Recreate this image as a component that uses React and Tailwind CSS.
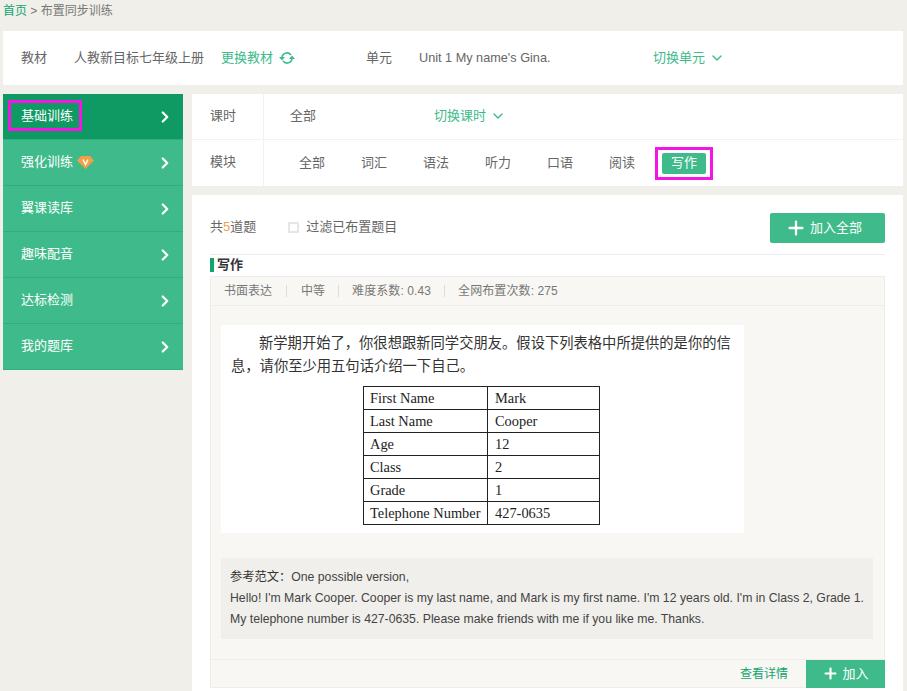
import { ChevronRight, ChevronDown, Plus } from 'lucide-react';

const SIDE = ['基础训练', '强化训练', '翼课读库', '趣味配音', '达标检测', '我的题库'];
const TABS = ['全部', '词汇', '语法', '听力', '口语', '阅读'];
const ROWS = [
  ['First Name', 'Mark'],
  ['Last Name', 'Cooper'],
  ['Age', '12'],
  ['Class', '2'],
  ['Grade', '1'],
  ['Telephone Number', '427-0635'],
];

function VipBadge() {
  return (
    <svg width="17" height="14" viewBox="0 0 17 14" className="ml-[4px]">
      <path d="M4 1h9l4 4.500L8.500 14 0 5.500z" fill="#f0a045" />
      <path d="M6 4.500l2.500 5 2.500-5" fill="none" stroke="#fff" strokeWidth="1.400" />
    </svg>
  );
}

function SyncIcon() {
  return (
    <svg width="16" height="14" viewBox="0 0 16 14" fill="none" className="ml-[6px]">
      <path d="M3 7a5 5 0 0 1 9-3" stroke="#3fbb8b" strokeWidth="1.600" />
      <path d="M13 7a5 5 0 0 1-9 3" stroke="#3fbb8b" strokeWidth="1.600" />
      <path d="M0 6h6L3 9.500z" fill="#3fbb8b" />
      <path d="M10 8h6l-3-3.500z" fill="#3fbb8b" />
    </svg>
  );
}

export default function App() {
  return (
    <div className="w-[907px] h-[691px] overflow-hidden bg-[#f0efea] text-[13px] text-[#666] font-['Liberation_Sans','Noto_Sans_CJK_SC',sans-serif]">
      {/* breadcrumb */}
      <div className="h-[31px] pl-[3px] pt-[3px] text-[12px] leading-[16px] text-[#777]">
        <span className="text-[#10a56f]">首页</span> &gt; 布置同步训练
      </div>

      {/* book bar */}
      <div className="ml-[3px] w-[900px] h-[54px] bg-white flex items-center">
        <span className="ml-[18px] w-[53px]">教材</span>
        <span className="w-[147px]">人教新目标七年级上册</span>
        <span className="flex items-center text-[#3dba8a]">
          更换教材
          <SyncIcon />
        </span>
        <span className="ml-[71px] w-[53px]">单元</span>
        <span className="w-[234px] text-[12.7px] mt-[2px]">Unit 1 My name's Gina.</span>
        <span className="flex items-center text-[#3dba8a] -mt-[1px]">
          切换单元
          <ChevronDown className="w-[16px] h-[16px] ml-[4px]" strokeWidth={2} />
        </span>
      </div>

      <div className="flex items-start mt-[9px] ml-[3px]">
        {/* sidebar */}
        <aside className="w-[180px] flex-none">
          {SIDE.map((label, i) => (
            <div
              key={label}
              className={`h-[46px] flex items-center justify-between pr-[9px] text-white border-b border-[#2fae7e] ${i === 0 ? 'bg-[#0e9a62] pl-[5px]' : 'bg-[#3fbb8b] pl-[18px]'}`}
            >
              <span className="flex items-center -mt-[2px]">
                {i === 0 ? (
                  <span className="w-[74px] h-[31px] border-[3px] border-[#f414e4] flex items-center pl-[10px]">{label}</span>
                ) : (
                  label
                )}
                {i === 1 && <VipBadge />}
              </span>
              <ChevronRight className="w-[18px] h-[18px]" strokeWidth={3} />
            </div>
          ))}
        </aside>

        <div className="w-[711px] ml-[9px] flex-none">
          {/* filters */}
          <div className="h-[92px] bg-white flex flex-col">
            <div className="h-[46px] flex items-center border-b border-[#f2f2f0]">
              <span className="w-[72px] h-full flex items-center pl-[18px] pb-[2px] border-r border-[#f2f2f0]">课时</span>
              <span className="ml-[26px] w-[144px] -mt-[2px]">全部</span>
              <span className="flex items-center text-[#3dba8a] -mt-[2px]">
                切换课时
                <ChevronDown className="w-[16px] h-[16px] ml-[4px]" strokeWidth={2} />
              </span>
            </div>
            <div className="flex-1 flex items-center">
              <span className="w-[72px] h-full flex items-center pl-[18px] pb-[2px] border-r border-[#f2f2f0]">模块</span>
              <div className="ml-[26px] flex items-center gap-[18px]">
                {TABS.map((t) => (
                  <span key={t} className="w-[44px] text-center">{t}</span>
                ))}
              </div>
              <div className="ml-[11px] w-[58px] h-[33px] border-[3px] border-[#f414e4] flex items-center justify-center">
                <span className="w-[44px] h-[21px] rounded-[2px] bg-[#3fbb8b] text-white text-center leading-[20px]">写作</span>
              </div>
            </div>
          </div>

          {/* question list */}
          <div className="mt-[9px] h-[500px] bg-white px-[18px]">
            <div className="h-[60px] flex items-center border-b border-[#ececec] pt-[5px]">
              <span>共<span className="text-[#f5a04a]">5</span>道题</span>
              <span className="ml-[32px] w-[11px] h-[11px] border-2 border-[#e6e6e6]" />
              <span className="ml-[7px] -mt-[1px]">过滤已布置题目</span>
              <button className="ml-auto w-[115px] h-[30px] mt-[1px] rounded-[2px] bg-[#3fbb8b] text-white flex items-center justify-center pr-[8px]">
                <Plus className="w-[22px] h-[22px] mr-[3px]" strokeWidth={2.500} />
                加入全部
              </button>
            </div>

            <div className="h-[21px] flex items-center pb-[2px]">
              <span className="w-[4px] h-[14px] bg-[#10a56f] mr-[3px]" />
              <span className="font-bold text-[#333]">写作</span>
            </div>

            <div className="w-[675px] h-[412px] border border-[#eeedea] bg-[#f8f7f3] flex flex-col">
              <div className="h-[29px] flex-none flex items-center pl-[13px] border-b border-[#eeedea] text-[12px] text-[#777]">
                <span>书面表达</span>
                <span className="mx-[14px] w-px h-[12px] bg-[#ddd]" />
                <span>中等</span>
                <span className="mx-[13px] w-px h-[12px] bg-[#ddd]" />
                <span className="tracking-[0.1px]">难度系数: 0.43</span>
                <span className="mx-[13px] w-px h-[12px] bg-[#ddd]" />
                <span className="tracking-[0.1px]">全网布置次数: 275</span>
              </div>

              <div className="flex-1 px-[10px] pt-[19px]">
                {/* question text */}
                <div className="w-[523px] h-[208px] bg-white px-[10px] pt-[7px] text-[#333]">
                  <p className="text-[14.300px] leading-[23px] indent-[28px]">
                    新学期开始了，你很想跟新同学交朋友。假设下列表格中所提供的是你的信息，请你至少用五句话介绍一下自己。
                  </p>
                  <table className="ml-[132px] mt-[8px] border-collapse font-['Liberation_Serif',serif] text-[14.400px] text-[#222]">
                    <tbody>
                      {ROWS.map(([a, b]) => (
                        <tr key={a} className="h-[23px]">
                          <td className="w-[124px] border border-[#222] pl-[6px] py-0 leading-[20px]">{a}</td>
                          <td className="w-[112px] border border-[#222] pl-[7px] py-0 leading-[20px]">{b}</td>
                        </tr>
                      ))}
                    </tbody>
                  </table>
                </div>

                {/* sample answer */}
                <div className="mt-[25px] w-[652px] h-[81px] bg-[#f0efeb] px-[9px] pt-[9px] text-[12.250px] leading-[21px] text-[#444]">
                  <div><span className="text-[#333]">参考范文：</span>One possible version,</div>
                  <div className="whitespace-nowrap">Hello! I'm Mark Cooper. Cooper is my last name, and Mark is my first name. I'm 12 years old. I'm in Class 2, Grade 1.</div>
                  <div className="whitespace-nowrap">My telephone number is 427-0635. Please make friends with me if you like me. Thanks.</div>
                </div>
              </div>

              <div className="h-[28px] flex-none flex items-center justify-end border-t border-[#eeedea]">
                <span className="text-[12px] text-[#10a56f] mr-[18px]">查看详情</span>
                <button className="w-[79px] h-[28px] -mr-[1px] bg-[#3fbb8b] text-white flex items-center justify-center">
                  <Plus className="w-[17px] h-[17px] mr-[3px]" strokeWidth={3} />
                  加入
                </button>
              </div>
            </div>
          </div>
        </div>
      </div>
    </div>
  );
}
